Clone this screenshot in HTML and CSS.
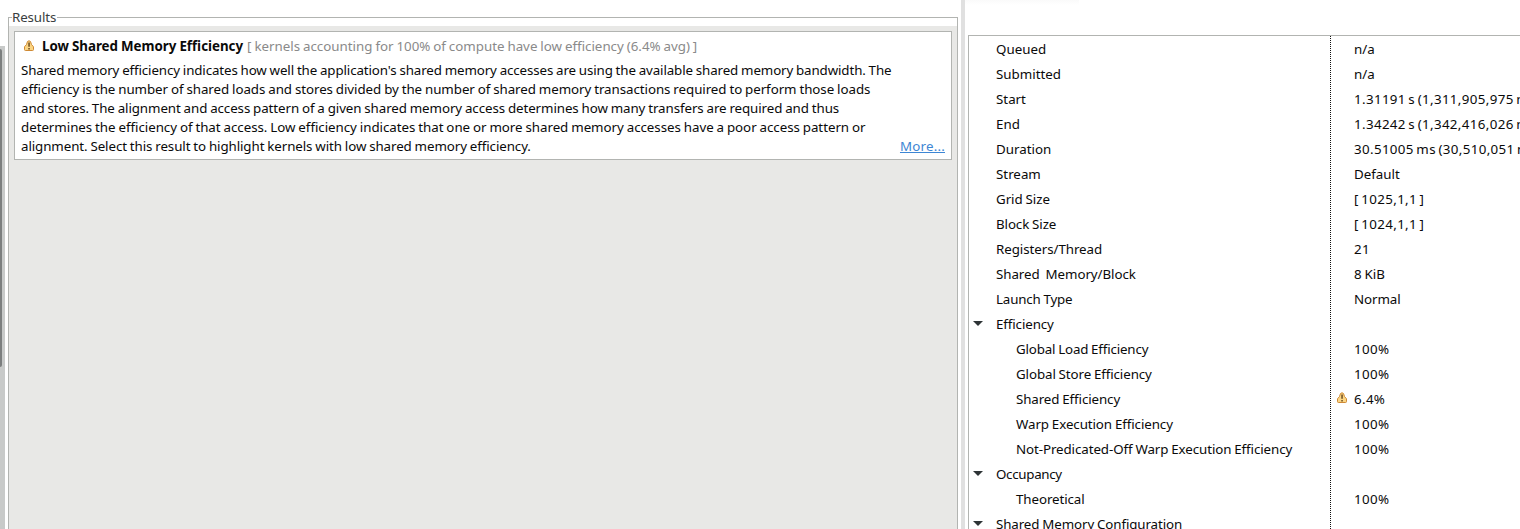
FILE: index.html
```
<!DOCTYPE html>
<html lang="en">
<head>
<meta charset="utf-8">
<title>Results</title>
<link rel="stylesheet" href="styles.css">
</head>
<body>
<svg width="0" height="0" class="defs">
  <symbol id="warn" viewBox="0 0 12 12">
    <path d="M4.5 1.5Q6 0 7.5 1.5L8.5 4.5 10.5 6.8V9.6Q10.5 10.5 9.6 10.5H2.4Q1.5 10.5 1.5 9.6V6.8L3.5 4.5Z" fill="#fbd583" stroke="#cf8a35" stroke-width="1"/>
    <path d="M5.3 2.6h1.5v4.2H5.3zM5.3 7.9h1.5v1.5H5.3z" fill="#6b4a20"/>
  </symbol>
  <symbol id="arrow" viewBox="0 0 10 5"><path d="M0 0H10L5 5Z" fill="#2e3436"/></symbol>
</svg>
<div class="app">
  <div class="scroll"><div class="thumb"></div></div>
  <fieldset class="results">
    <legend>Results</legend>
    <div class="results-body">
      <article class="card">
        <header><svg class="warn"><use href="#warn"/></svg><b>Low Shared Memory Efficiency</b><span class="note">[ kernels accounting for 100% of compute have low efficiency (6.4% avg) ]</span></header>
        <div class="desc">
          <p><span class="t8">Shared memory efficiency indicates how well the application's shared memory accesses are using the available shared memory bandwidth. The</span></p>
          <p><span class="t2">efficiency is the number of shared loads and stores divided by the number of shared memory transactions required to perform those loads</span></p>
          <p><span class="t4">and stores. The alignment and access pattern of a given shared memory access determines how many transfers are required and thus</span></p>
          <p><span class="t1">determines the efficiency of that access. Low efficiency indicates that one or more shared memory accesses have a poor access pattern or</span></p>
          <p><span class="t4">alignment. Select this result to highlight kernels with low shared memory efficiency.</span><a class="more">More...</a></p>
        </div>
      </article>
    </div>
  </fieldset>
  <div class="sash"></div>
  <section class="props">
    <div class="tab-edge"></div>
    <div class="table">
      <div class="names">
        <div class="row">Queued</div>
        <div class="row">Submitted</div>
        <div class="row">Start</div>
        <div class="row">End</div>
        <div class="row">Duration</div>
        <div class="row">Stream</div>
        <div class="row t2">Grid Size</div>
        <div class="row t5">Block Size</div>
        <div class="row t2">Registers/Thread</div>
        <div class="row t2">Shared&nbsp; Memory/Block</div>
        <div class="row t6">Launch Type</div>
        <div class="row group t5"><svg class="arrow"><use href="#arrow"/></svg>Efficiency</div>
        <div class="row child t6">Global Load Efficiency</div>
        <div class="row child t5">Global Store Efficiency</div>
        <div class="row child t5">Shared Efficiency</div>
        <div class="row child t4">Warp Execution Efficiency</div>
        <div class="row child t4">Not-Predicated-Off Warp Execution Efficiency</div>
        <div class="row group t7"><svg class="arrow"><use href="#arrow"/></svg>Occupancy</div>
        <div class="row child t4">Theoretical</div>
        <div class="row group t5"><svg class="arrow"><use href="#arrow"/></svg>Shared Memory Configuration</div>
      </div>
      <div class="values">
        <div class="row">n/a</div>
        <div class="row">n/a</div>
        <div class="row num">1.31191 s (1,311,905,975 ns)</div>
        <div class="row num">1.34242 s (1,342,416,026 ns)</div>
        <div class="row num">30.51005 ms (30,510,051 ns)</div>
        <div class="row">Default</div>
        <div class="row num">[ 1025,1,1 ]</div>
        <div class="row num">[ 1024,1,1 ]</div>
        <div class="row num">21</div>
        <div class="row">8 KiB</div>
        <div class="row t5">Normal</div>
        <div class="row"></div>
        <div class="row pct">100%</div>
        <div class="row pct">100%</div>
        <div class="row flagged pct"><svg class="warn"><use href="#warn"/></svg>6.4%</div>
        <div class="row pct">100%</div>
        <div class="row pct">100%</div>
        <div class="row"></div>
        <div class="row pct">100%</div>
      </div>
    </div>
  </section>
</div>
</body>
</html>
```
FILE: styles.css
```
* { box-sizing: border-box; }
body { margin: 0; background: #fff; color: #0a0a0a; font: 13.333px/19px "Noto Sans", sans-serif; word-spacing: -0.47px; overflow: hidden; }
.defs { display: block; height: 0; }
.app { display: flex; width: 1520px; height: 529px; overflow: hidden; white-space: nowrap; }
.scroll { width: 5px; height: 483px; margin-top: 46px; padding-top: 3px; background: #c8cac9; flex: none; }
.thumb { width: 2px; height: 318px; background: #7c7f7f; border-radius: 0 2px 2px 0; }
.results { width: 950px; height: 530px; margin: 8px 0 0 3px; padding: 0; border: 1px solid #b2b4b1; min-width: 0; flex: none; }
legend { margin-left: 3px; padding: 0 1px 0 0; color: #3a3e40; height: 18px; line-height: 18px; letter-spacing: -0.12px; }
.results-body { height: 510px; background: #e8e8e6; padding: 5px 5px 0; }
.card { height: 129px; border: 1px solid #b2b4b1; background: #fff; padding: 5px 6px 0; }
.card header { display: flex; align-items: center; height: 19px; padding-left: 2px; }
.warn { width: 12px; height: 12px; flex: none; display: block; }
.card .warn { margin-right: 7px; margin-bottom: 2px; }
.note { color: #8a8a8a; margin-left: 4px; word-spacing: -0.57px; }
.desc { margin-top: 5px; }
.desc p { margin: 0; display: flex; justify-content: space-between; }
.more { color: #3d86d4; text-decoration: underline; letter-spacing: 0.2px; }

/* Tracking steps */
.t1 { letter-spacing: -0.044px; }
.t2 { letter-spacing: -0.06px; }
.t4 { letter-spacing: -0.086px; }
.t5 { letter-spacing: -0.1px; }
.t6 { letter-spacing: -0.16px; }
.t7 { letter-spacing: -0.3px; }
.t8 { letter-spacing: -0.115px; }
.num { letter-spacing: 0.36px; word-spacing: -1.3px; }
.pct { letter-spacing: 0.35px; }

.sash { width: 4px; margin-left: 3px; background: #e0e0e0; flex: none; }
.props { flex: 1; min-width: 0; padding-left: 3px; }
.tab-edge { width: 114px; height: 5px; margin-left: -3px; background: linear-gradient(#fafafa, #fff); }
.table { display: flex; margin-top: 30px; height: 494px; border: solid #b2b4b1; border-width: 1px 0 0 1px; overflow: hidden; }
.row { height: 25px; line-height: 25px; }
.names { width: 361px; padding: 1px 0 0 27px; flex: none; }
.values { flex: 1; min-width: 0; padding: 1px 0 0 24px; background: repeating-linear-gradient(#111 0 1px, #fff 1px 2px) 0 0 / 1px 100% no-repeat; }
.child { padding-left: 20px; }
.group, .flagged { display: flex; align-items: center; }
.arrow { width: 10px; height: 5px; margin: 0 13px 2px -23px; }
.flagged .warn { margin: 0 6px 3px -18px; }
```
